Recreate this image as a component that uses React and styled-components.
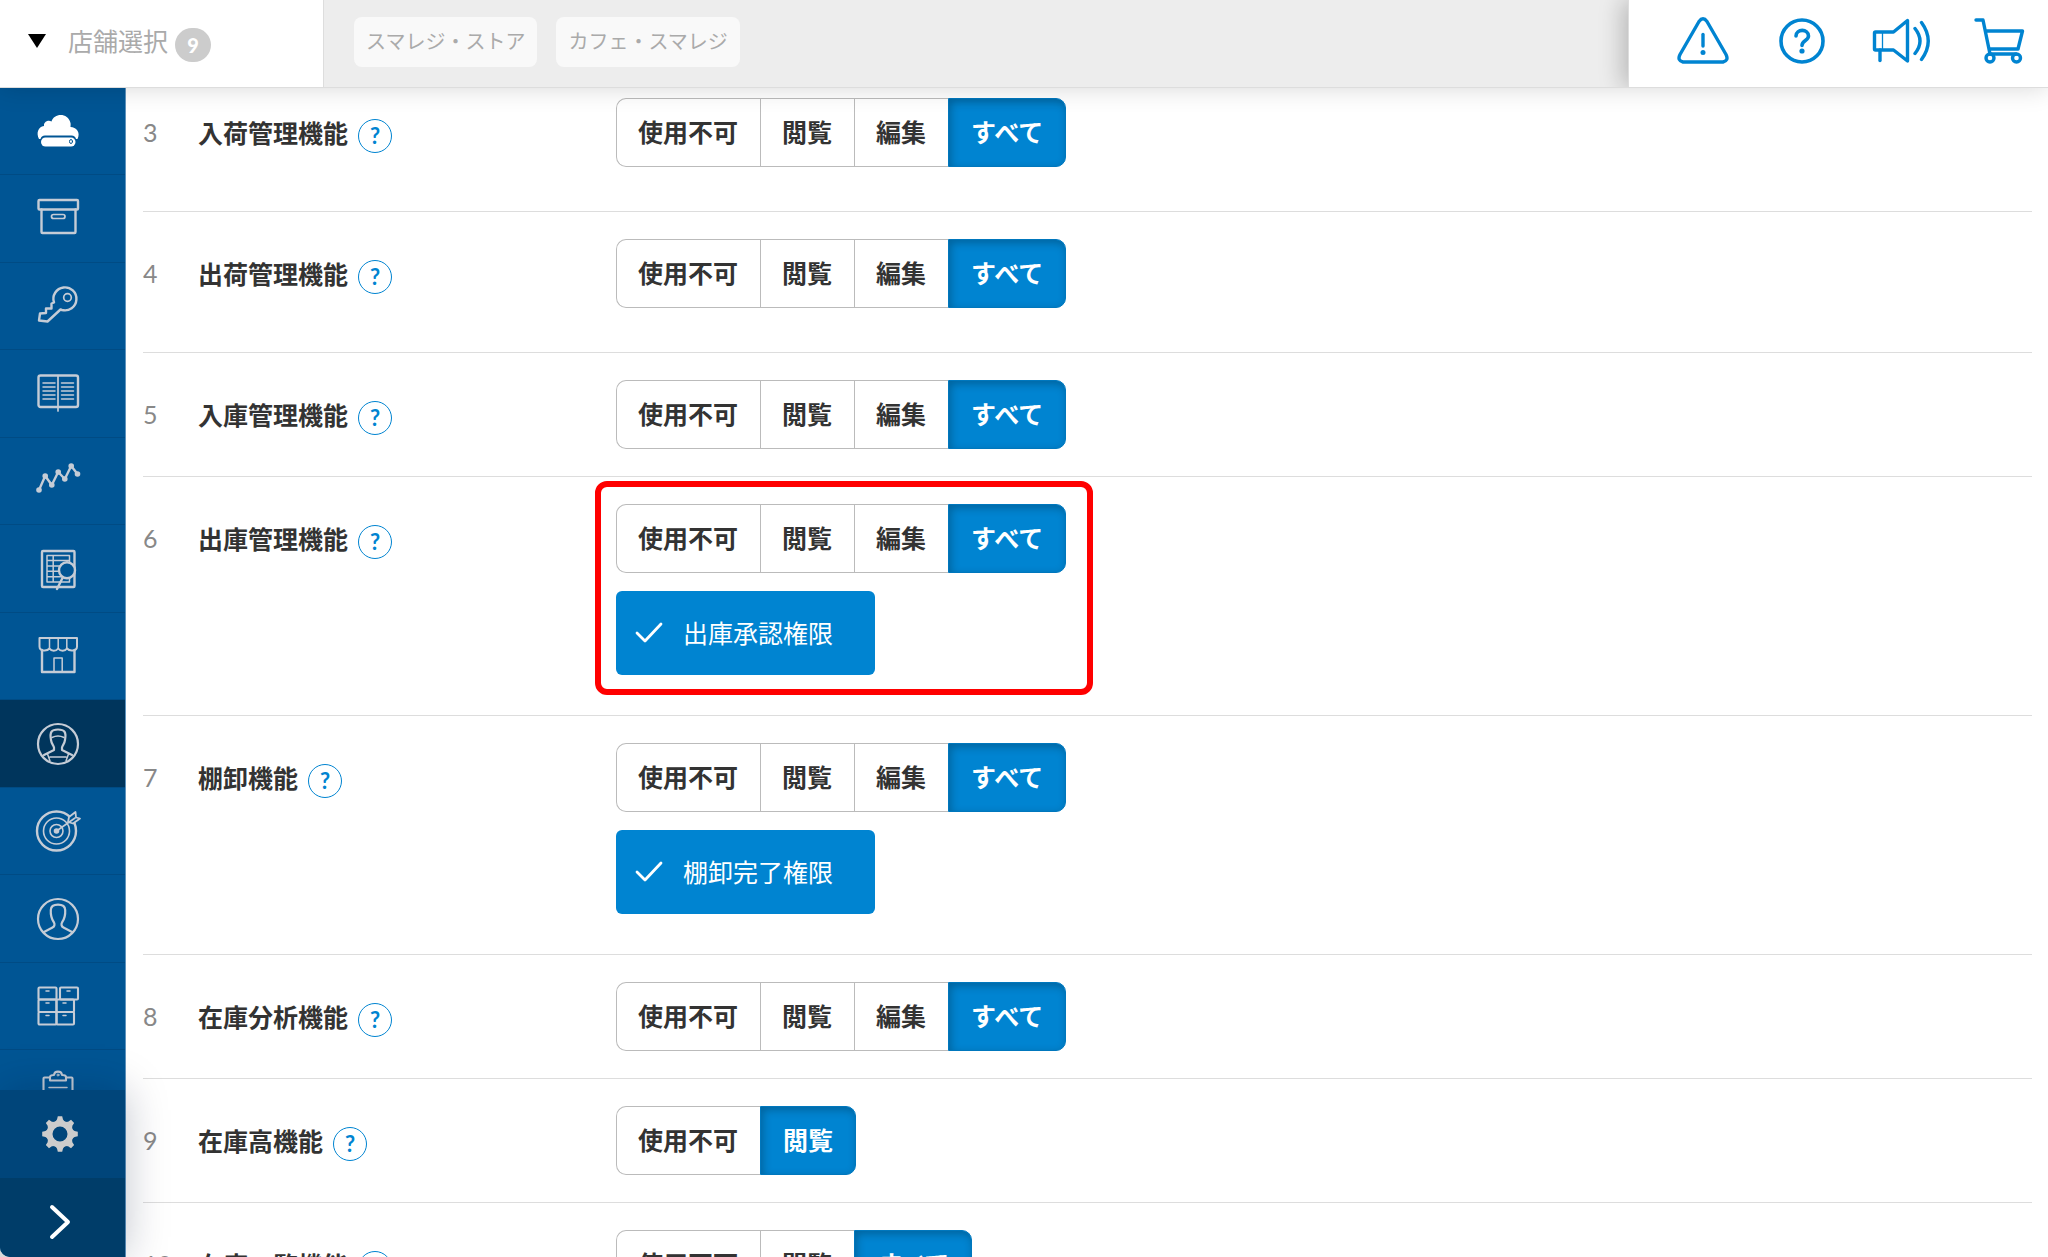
import React, { useState } from 'react';
import styled, { createGlobalStyle, css } from 'styled-components';

const GlobalStyle = createGlobalStyle`
  * {
    box-sizing: border-box;
  }

  body {
    margin: 0;
    background: #d8d8d8;
    color: #333;
    font-family: Lato, 'Noto Sans CJK JP', sans-serif;
    font-size: 25px;
    line-height: 36px;
  }

  button,
  input {
    font: inherit;
  }
`;

const Page = styled.div`
  display: flex;
  flex-direction: column;
  height: 100vh;
  overflow: hidden;
  background: #fff;
  border-bottom-left-radius: 10px;
`;

const Header = styled.header`
  position: relative;
  z-index: 3;
  display: flex;
  flex: none;
  height: 88px;
  background: #ededed;
  border-bottom: 1px solid #ddd;
  box-shadow: 0 0 24px rgba(0, 0, 0, 0.16);
`;

const StoreSelect = styled.button`
  display: flex;
  align-items: center;
  flex: none;
  width: 324px;
  padding: 0 0 6px 28px;
  border: 0;
  border-right: 1px solid #ddd;
  background: #fff;
  color: #aaa;
  text-align: left;
`;

const Triangle = styled.span`
  margin-right: 22px;
  border: 9px solid transparent;
  border-top: 14px solid #000;
  border-bottom: 0;
`;

const Count = styled.span`
  width: 36px;
  height: 34px;
  margin: 8px 0 0 7px;
  border-radius: 17px;
  background: #ccc;
  color: #fff;
  font-size: 20px;
  font-weight: 900;
  line-height: 34px;
  text-align: center;
`;

const StoreTags = styled.div`
  display: flex;
  flex: 1;
  gap: 19px;
  min-width: 0;
  padding: 17px 30px;
  overflow: hidden;
`;

const StoreTag = styled.span`
  flex: none;
  height: 50px;
  padding: 0 12px;
  border-radius: 8px;
  background: #f9f9f9;
  color: #aaa;
  font-size: 20px;
  line-height: 48px;
`;

const Tools = styled.div`
  display: grid;
  grid-template-columns: repeat(4, 99px);
  flex: none;
  width: 420px;
  padding-left: 24px;
  background: #fff;
  border-left: 1px solid #ddd;
  box-shadow: -6px 0 22px rgba(0, 0, 0, 0.22);
  clip-path: inset(0 0 0 -40px);
`;

const ToolButton = styled.button`
  display: flex;
  align-items: center;
  justify-content: center;
  padding: 0 0 5px;
  border: 0;
  background: none;
  color: #0084d1;
`;

const Body = styled.div`
  display: flex;
  flex: 1;
  min-height: 0;
`;

const Sidebar = styled.aside`
  position: relative;
  z-index: 2;
  display: flex;
  flex-direction: column;
  flex: none;
  width: 126px;
  background: #005594;
  border-right: 1px solid #5f93bd;
`;

const SideNav = styled.nav`
  display: grid;
  grid-auto-rows: 87px 88px;
  flex: 1;
  min-height: 0;
  overflow: hidden;
`;

const SideLink = styled.a`
  display: flex;
  align-items: center;
  justify-content: center;
  padding-right: 9px;
  border-bottom: 1px solid #004b84;
  background: ${props => (props.$active ? '#00355c' : '#005594')};
  color: ${props => (props.$bright ? '#fff' : '#c5ccd6')};
`;

const SideFooter = styled.div`
  flex: none;
  box-shadow: 0 0 40px rgba(0, 20, 50, 0.25);
`;

const FooterButton = styled.button`
  display: flex;
  align-items: center;
  justify-content: center;
  width: 100%;
  height: ${props => (props.$last ? 79 : 88)}px;
  padding: ${props => (props.$last ? '8px' : '0')} 5px 0 0;
  border: 0;
  background: ${props => (props.$last ? '#003d69' : '#00457a')};
  color: ${props => (props.$last ? '#fff' : '#ccc')};
`;

const Main = styled.main`
  flex: 1;
  min-width: 0;
  overflow: hidden;
`;

const PermissionList = styled.div`
  margin: -17px 16px 0 17px;
`;

const Row = styled.div`
  display: grid;
  grid-template-columns: 55px 418px 1fr;
  align-items: start;
  padding: 27px 0;
  border-bottom: 1px solid #ddd;
`;

const Number = styled.span`
  color: #888;
  line-height: 69px;
`;

const Label = styled.div`
  display: flex;
  align-items: center;
  height: 69px;
  font-weight: 700;
`;

const HelpButton = styled.button`
  width: 34px;
  height: 34px;
  margin: 6px 0 0 10px;
  padding: 0;
  border: 1px solid #0084d1;
  border-radius: 50%;
  background: #fff;
  color: #0084d1;
  font-size: 22px;
  line-height: 32px;
`;

const Controls = styled.div`
  position: relative;
  width: fit-content;
  margin-bottom: ${props => props.$space}px;
`;

const Segments = styled.fieldset`
  display: flex;
  width: fit-content;
  height: 69px;
  margin: 0;
  padding: 0;
  border: 0;
`;

const HiddenInput = styled.input`
  position: absolute;
  opacity: 0;
  pointer-events: none;
`;

const Segment = styled.label`
  height: 69px;
  padding: 0 22px 0 21px;
  border: 1px solid #bbb;
  border-right-width: 0;
  font-weight: 700;
  line-height: 66px;
  white-space: nowrap;

  &:first-of-type {
    border-radius: 10px 0 0 10px;
  }

  &:last-of-type {
    padding: 0 22px;
    border-right-width: 1px;
    border-radius: 0 10px 10px 0;
  }

  ${props =>
    props.$selected &&
    css`
      border-color: #0077bd;
      background: #0084d1;
      box-shadow: inset 2px 3px 8px rgba(0, 0, 0, 0.25);
      color: #fff;
    `}
`;

const Option = styled.label`
  display: flex;
  align-items: center;
  width: fit-content;
  height: 84px;
  margin-top: 18px;
  padding: 0 42px 0 19px;
  border-radius: 6px;
  background: #0084d1;
  color: #fff;

  svg {
    margin-right: 20px;
    visibility: ${props => (props.$checked ? 'visible' : 'hidden')};
  }
`;

const Highlight = styled.div`
  position: absolute;
  inset: -23px -27px -20px -21px;
  border: 6px solid #f00;
  border-radius: 12px;
  pointer-events: none;
`;

const Svg = ({ width = 48, height = 48, stroke = 2.4, children }) => (
  <svg
    width={width}
    height={height}
    viewBox={`0 0 ${width} ${height}`}
    fill="none"
    stroke="currentColor"
    strokeWidth={stroke}
    strokeLinecap="round"
    strokeLinejoin="round"
    aria-hidden="true"
  >
    {children}
  </svg>
);

const CloudIcon = () => (
  <Svg>
    <path
      d="M5 32C2 26 4 20 10 19C9.500 15 14 12.500 17.500 14.500C20 6 34 5.500 36.500 16C36.800 17.500 36.500 19 36.500 20C42 20 47 25 43.500 32H42C41.500 30 40 28.500 37.500 28.500H11C8.500 28.500 7 30 6.500 32Z"
      fill="currentColor"
      stroke="none"
    />
    <rect x="7" y="30.500" width="34.500" height="9" rx="4.500" fill="currentColor" stroke="none" />
    <ellipse cx="37" cy="34.500" rx="1.500" ry="2" stroke="#005594" strokeWidth="1" />
  </Svg>
);

const BoxIcon = () => (
  <Svg>
    <rect x="4.500" y="5" width="39.500" height="9.500" rx="1" />
    <path d="M7.500 14.500V37A1 1 0 0 0 8.500 38H40.500A1 1 0 0 0 41.500 37V14.500" />
    <rect x="17.500" y="19.500" width="13.500" height="4" rx="2" strokeWidth="1.700" />
  </Svg>
);

const KeyIcon = () => (
  <Svg>
    <path d="M20 20.500A11.500 11.500 0 1 1 28 28L26.500 27.500L13.500 39.500L5 38.500L6 31.500L12 31V26.500H17.500V21.500Z" />
    <circle cx="33.500" cy="15.500" r="3.800" strokeWidth="1.700" />
  </Svg>
);

const BookIcon = () => (
  <Svg>
    <rect x="4.500" y="5.500" width="39.500" height="31.500" rx="2" />
    <path d="M24 5.500V41" strokeWidth="1.700" />
    <path
      d="M9 13H21M9 17H21M9 21H21M9 25H21M9 29H21M27.500 13H39.500M27.500 17H39.500M27.500 21H39.500M27.500 25H39.500M27.500 29H39.500"
      strokeWidth="1.500"
    />
  </Svg>
);

const points = [[5, 33], [11.2, 19], [17.8, 28], [24.2, 15], [30.8, 22], [37.2, 9], [43.5, 17]];

const ChartIcon = () => (
  <Svg>
    <polyline points={points.join(' ')} />
    {points.map(([x, y]) => (
      <circle key={x} cx={x} cy={y} r="2.800" fill="currentColor" stroke="none" />
    ))}
  </Svg>
);

const ReportIcon = () => (
  <Svg>
    <rect x="8" y="6" width="32.500" height="36" rx="1" />
    <path
      d="M13 10.500H35.500V37H13ZM13 15.500H35.500M13 21H35.500M13 26.300H35.500M13 31.700H35.500M19.200 10.500V37"
      strokeWidth="1.500"
    />
    <circle cx="33" cy="25.300" r="8" fill="#005594" />
    <path d="M28.500 33L23 44" />
  </Svg>
);

const ShopIcon = () => (
  <Svg>
    <path d="M8 18V40H40.500V18" />
    <path d="M5.500 6H43V14.500C43 19.500 35.500 19.500 33 16.500C31 19.500 26.500 19.500 24.200 16.500C22 19.500 17.500 19.500 15.500 16.500C13 19.500 5.500 19.500 5.500 14.500Z" strokeWidth="2" />
    <path d="M15.500 6V16M24.200 6V16M32.800 6V16M20 40V26H28.200V40" strokeWidth="1.500" />
  </Svg>
);

const StaffIcon = () => (
  <Svg stroke={2.2}>
    <circle cx="24" cy="24" r="20" />
    <path d="M17 20C15.500 12 17.500 9.500 24 9.500C30.500 9.500 32.500 12 31 20C30.500 24 28.500 25 28 27.500V30L38 35M17 20C17.500 24 19.500 25 20 27.500V30L10 35" />
    <path d="M18 17.500C22 15.500 26 15.500 30 17.500M13.500 34L16 41M34.500 34L32 41M16 37H32" strokeWidth="1.500" />
  </Svg>
);

const TargetIcon = () => (
  <Svg>
    <circle cx="22.500" cy="24" r="19.500" />
    <circle cx="22.500" cy="24" r="13" strokeWidth="1.600" />
    <circle cx="22.500" cy="24" r="6.500" strokeWidth="1.600" />
    <circle cx="22.500" cy="24" r="2.800" fill="currentColor" stroke="none" />
    <path
      d="M34 15L35 10L41.500 5L42 10.500L46 11.500L39 16.500Z"
      fill="#005594"
      strokeWidth="1.800"
    />
    <path d="M22.500 24L41 11" strokeWidth="1.600" />
  </Svg>
);

const UserIcon = () => (
  <Svg stroke={2.2}>
    <circle cx="24" cy="24" r="20" />
    <path d="M10 37L18.500 32.500C20.500 31.500 21 29.500 20 27.500C17.500 24 16.500 20 16.800 15C17 11 20 9.700 24 9.700C28 9.700 31 11 31.200 15C31.500 20 30.500 24 28 27.500C27 29.500 27.500 31.500 29.500 32.500L38 37" />
  </Svg>
);

const CabinetIcon = () => (
  <Svg stroke={2.1}>
    <rect x="4.500" y="5.500" width="18" height="12" rx="1" />
    <rect x="26" y="5.500" width="18" height="12" rx="1" />
    <rect x="4.500" y="17.500" width="18" height="12.500" rx="1" />
    <rect x="22.500" y="17.500" width="17.500" height="12.500" rx="1" />
    <rect x="4.500" y="30" width="18" height="12.500" rx="1" />
    <rect x="22.500" y="30" width="17.500" height="12.500" rx="1" />
    <path d="M12 9H15M33 9H36M12 21H15M29 21H32M12 33.500H15M29 33.500H32" strokeWidth="1.500" />
  </Svg>
);

const ClipboardIcon = () => (
  <Svg stroke={2.1}>
    <path d="M16 7.500H10.500A1 1 0 0 0 9.500 8.500V45H38.500V8.500A1 1 0 0 0 37.500 7.500H32" />
    <path d="M16 10.500V7C16 5.500 18 5 20 5C20.500 0.500 27.500 0.500 28 5C30 5 32 5.500 32 7V10.500Z" />
    <path d="M15 17.500H33M15 24H33" strokeWidth="1.500" />
    <circle cx="24" cy="5" r="1" strokeWidth="1" />
  </Svg>
);

const GearIcon = () => (
  <Svg stroke={6}>
    <circle cx="24" cy="24" r="10.500" />
    {[0, 45, 90, 135, 180, 225, 270, 315].map(angle => (
      <path
        key={angle}
        d="M19 12L21 9.500L21.800 6.200H26.200L27 9.500L29 12Z"
        fill="currentColor"
        stroke="none"
        transform={`rotate(${angle} 24 24)`}
      />
    ))}
  </Svg>
);

const ChevronIcon = () => (
  <Svg stroke={4}>
    <path d="M16 9L32 24L16 39" />
  </Svg>
);

const AlertIcon = () => (
  <Svg width={52} height={48} stroke={3.4}>
    <path d="M22 4.500Q26 -1 30 4.500L49 37.500Q52 43.500 46 45H6Q0 43.500 3 37.500Z" />
    <path d="M26 17.500V29" />
    <circle cx="26" cy="35.500" r="2.500" fill="currentColor" stroke="none" />
  </Svg>
);

const QuestionIcon = () => (
  <Svg stroke={3.6}>
    <circle cx="24" cy="24" r="21" />
    <path d="M18 19C18 11.500 30.500 11.500 30.500 19C30.500 23.500 24 23.500 24 28.500" />
    <circle cx="24" cy="34" r="2.600" fill="currentColor" stroke="none" />
  </Svg>
);

const MegaphoneIcon = () => (
  <Svg width={60} height={48} stroke={3.4}>
    <path d="M4.500 15H22.500L36.500 3.500V44L22.500 33H4.500A1 1 0 0 1 3.500 32V16A1 1 0 0 1 4.500 15Z" />
    <path d="M9 33V43.500" />
    <path d="M11.500 15V33" strokeWidth="1.300" />
    <path d="M44 11.500Q54 24 44 36.500M50.500 5.500Q64 24 50.500 42.500" />
  </Svg>
);

const CartIcon = () => (
  <Svg width={54} height={48} stroke={3.4}>
    <path d="M3 3H10L17 37M13 14H49.500L45 32H16" />
    <path d="M18 37H43" />
    <circle cx="17" cy="41" r="4" />
    <circle cx="43.500" cy="41" r="4" />
  </Svg>
);

const CheckIcon = () => (
  <Svg width={28} height={24} stroke={2.8}>
    <path d="M2 12L10 20L26 3" />
  </Svg>
);

const menu = [
  { name: 'クラウド', icon: CloudIcon, bright: true },
  { name: '商品', icon: BoxIcon },
  { name: '権限', icon: KeyIcon },
  { name: '台帳', icon: BookIcon },
  { name: '分析', icon: ChartIcon },
  { name: 'レポート', icon: ReportIcon },
  { name: '店舗', icon: ShopIcon },
  { name: 'スタッフ', icon: StaffIcon, active: true },
  { name: '目標', icon: TargetIcon },
  { name: '会員', icon: UserIcon },
  { name: '在庫', icon: CabinetIcon },
  { name: '棚卸', icon: ClipboardIcon },
];

const tools = [
  { name: 'お知らせ', icon: AlertIcon },
  { name: 'ヘルプ', icon: QuestionIcon },
  { name: 'ニュース', icon: MegaphoneIcon },
  { name: 'カート', icon: CartIcon },
];

const levels = ['使用不可', '閲覧', '編集', 'すべて'];

const permissions = [
  { id: 3, label: '入荷管理機能', levels, space: 17 },
  { id: 4, label: '出荷管理機能', levels, space: 17 },
  { id: 5, label: '入庫管理機能', levels },
  { id: 6, label: '出庫管理機能', levels, option: '出庫承認権限', space: 13, highlight: true },
  { id: 7, label: '棚卸機能', levels, option: '棚卸完了権限', space: 13 },
  { id: 8, label: '在庫分析機能', levels },
  { id: 9, label: '在庫高機能', levels: ['使用不可', '閲覧'] },
  { id: 10, label: '在庫一覧機能', levels: ['使用不可', '閲覧', 'すべて'] },
];

const PermissionRow = ({ item }) => {
  const [value, setValue] = useState(item.levels[item.levels.length - 1]);
  const [checked, setChecked] = useState(true);

  return (
    <Row>
      <Number>{item.id}</Number>
      <Label>
        {item.label}
        <HelpButton type="button" aria-label={`${item.label}のヘルプ`}>?</HelpButton>
      </Label>
      <Controls $space={item.space || 0}>
        <Segments aria-label={item.label}>
          {item.levels.map(level => (
            <Segment key={level} $selected={level === value}>
              <HiddenInput
                type="radio"
                name={`permission-${item.id}`}
                checked={level === value}
                onChange={() => setValue(level)}
              />
              {level}
            </Segment>
          ))}
        </Segments>
        {item.option && (
          <Option $checked={checked}>
            <HiddenInput
              type="checkbox"
              checked={checked}
              onChange={() => setChecked(!checked)}
            />
            <CheckIcon />
            {item.option}
          </Option>
        )}
        {item.highlight && <Highlight />}
      </Controls>
    </Row>
  );
};

const App = () => {
  return (
    <>
      <GlobalStyle />
      <Page>
        <Header>
          <StoreSelect type="button">
            <Triangle />
            店舗選択
            <Count>9</Count>
          </StoreSelect>
          <StoreTags>
            <StoreTag>スマレジ・ストア</StoreTag>
            <StoreTag>カフェ・スマレジ</StoreTag>
          </StoreTags>
          <Tools>
            {tools.map(({ name, icon: Icon }) => (
              <ToolButton key={name} type="button" aria-label={name}>
                <Icon />
              </ToolButton>
            ))}
          </Tools>
        </Header>
        <Body>
          <Sidebar>
            <SideNav>
              {menu.map(({ name, icon: Icon, active, bright }) => (
                <SideLink key={name} href="#" aria-label={name} $active={active} $bright={bright}>
                  <Icon />
                </SideLink>
              ))}
            </SideNav>
            <SideFooter>
              <FooterButton type="button" aria-label="設定">
                <GearIcon />
              </FooterButton>
              <FooterButton type="button" aria-label="メニューを開く" $last>
                <ChevronIcon />
              </FooterButton>
            </SideFooter>
          </Sidebar>
          <Main>
            <PermissionList>
              {permissions.map(item => (
                <PermissionRow key={item.id} item={item} />
              ))}
            </PermissionList>
          </Main>
        </Body>
      </Page>
    </>
  );
};

export default App;
